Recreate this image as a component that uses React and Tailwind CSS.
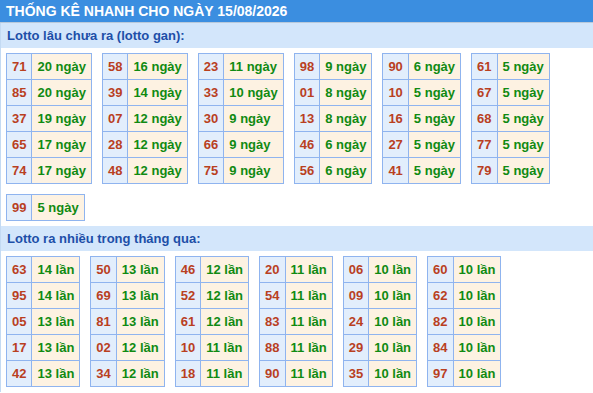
import React from "react";

const gan = [
  [["71", "20"], ["85", "20"], ["37", "19"], ["65", "17"], ["74", "17"]],
  [["58", "16"], ["39", "14"], ["07", "12"], ["28", "12"], ["48", "12"]],
  [["23", "11"], ["33", "10"], ["30", "9"], ["66", "9"], ["75", "9"]],
  [["98", "9"], ["01", "8"], ["13", "8"], ["46", "6"], ["56", "6"]],
  [["90", "6"], ["10", "5"], ["16", "5"], ["27", "5"], ["41", "5"]],
  [["61", "5"], ["67", "5"], ["68", "5"], ["77", "5"], ["79", "5"]],
  [["99", "5"]],
];

const nhieu = [
  [["63", "14"], ["95", "14"], ["05", "13"], ["17", "13"], ["42", "13"]],
  [["50", "13"], ["69", "13"], ["81", "13"], ["02", "12"], ["34", "12"]],
  [["46", "12"], ["52", "12"], ["61", "12"], ["10", "11"], ["18", "11"]],
  [["20", "11"], ["54", "11"], ["83", "11"], ["88", "11"], ["90", "11"]],
  [["06", "10"], ["09", "10"], ["24", "10"], ["29", "10"], ["35", "10"]],
  [["60", "10"], ["62", "10"], ["82", "10"], ["84", "10"], ["97", "10"]],
];

// one small two-column table
const MiniTable = ({ rows, unit }) => (
  <table className="m-[5px] border-collapse border border-[#8fb4ef]">
    <tbody>
      {rows.map(([num, count], i) => (
        <tr key={i} className="h-[26px]">
          <td className="border border-[#8fb4ef] bg-[#e2eefc] px-[5px] text-center font-bold text-[#b9401f]">
            {num}
          </td>
          <td className="border border-[#8fb4ef] bg-[#fdf2e2] px-[5px] font-bold text-[#108a12]">
            {count} {unit}
          </td>
        </tr>
      ))}
    </tbody>
  </table>
);

const SectionTitle = ({ children }) => (
  <div className="h-[25px] bg-[#d3e6fb] pl-[6px] text-[13px] leading-[25px] font-bold text-[#1d4fa8]">
    {children}
  </div>
);

export default function App() {
  return (
    <div
      className="h-[393px] w-[593px] overflow-hidden bg-white text-[13px] leading-[16px]"
      style={{ fontFamily: '"Liberation Sans", Arial, sans-serif' }}
    >
      <div className="h-[23px] border-b border-[#b9c9da] bg-[#3b8ee0] pl-[6px] text-[14px] leading-[23px] font-bold text-white">
        THỐNG KÊ NHANH CHO NGÀY 15/08/2026
      </div>
      <div className="border-l border-[#c3daf3]">
        <SectionTitle>Lotto lâu chưa ra (lotto gan):</SectionTitle>
        <div className="flex flex-wrap items-start">
          {gan.map((rows, i) => (
            <MiniTable key={i} rows={rows} unit="ngày" />
          ))}
        </div>
        <SectionTitle>Lotto ra nhiều trong tháng qua:</SectionTitle>
        <div className="flex flex-wrap items-start">
          {nhieu.map((rows, i) => (
            <MiniTable key={i} rows={rows} unit="lần" />
          ))}
        </div>
      </div>
    </div>
  );
}
